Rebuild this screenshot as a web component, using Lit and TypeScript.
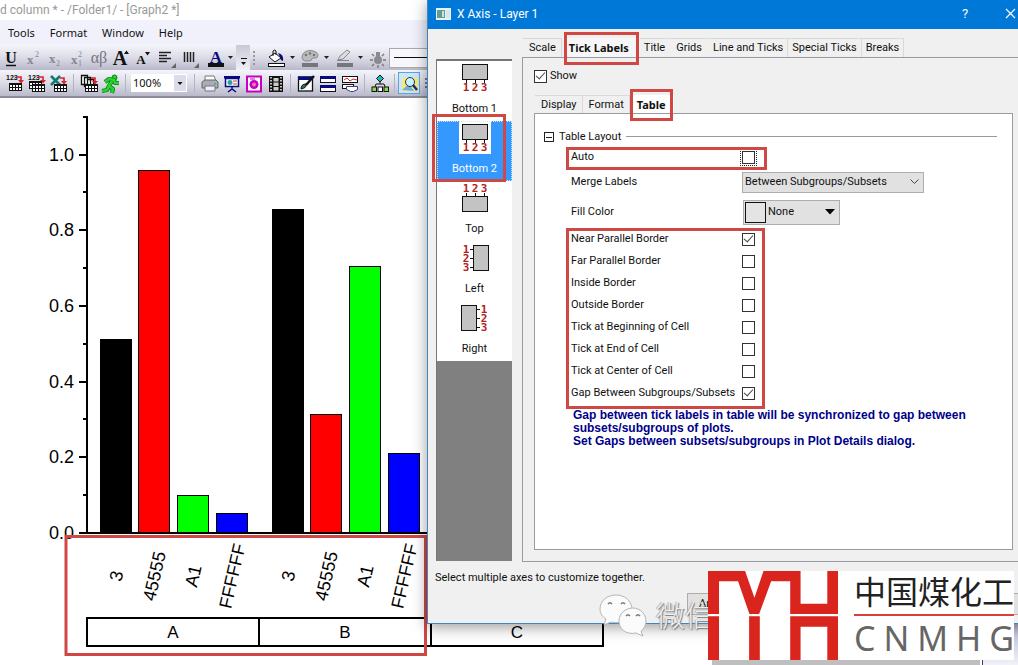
import { LitElement, html, svg, css, nothing } from "lit";
import { customElement, property, state } from "lit/decorators.js";

const NAVY = "#0a0a80";

/* ---------- toolbar glyphs, drawn on a 22 x 22 grid ---------- */
const grid = (x: number, y: number) => svg`
  <rect x=${x} y=${y} width="13" height="8" fill="#fff"/>
  <path d="M${x} ${y + 0.5}h13M${x} ${y + 1.5}h13M${x} ${y + 4.5}h13M${x} ${y + 7.5}h13M${x + 0.5} ${y}v8M${x + 3.5} ${y}v8M${x + 6.5} ${y}v8M${x + 9.5} ${y}v8M${x + 12.5} ${y}v8" stroke="#111" fill="none"/>`;
const redArrow = (x: number, y: number) => svg`
  <path d="M${x} ${y}h4v4" stroke="#e0202a" stroke-width="1.6" fill="none"/>
  <path d="M${x + 1} ${y + 3}h6l-3 3.5z" fill="#e0202a"/>`;

const icons: Record<string, unknown> = {
  underline: svg`<text x="10" y="15" class="serif" font-size="16" font-weight="700" text-anchor="middle" fill="#111">U</text><path d="M5 17.500h10" stroke="#111" stroke-width="1.500"/>`,
  sup: svg`<text x="4" y="16" class="serif" font-size="13" font-weight="700" fill="#858590">x</text><text x="12" y="9" class="serif" font-size="8" fill="#858590">2</text>`,
  sub: svg`<text x="4" y="15" class="serif" font-size="13" font-weight="700" fill="#858590">x</text><text x="11" y="18" class="serif" font-size="8" fill="#858590">2</text>`,
  supsub: svg`<text x="4" y="16" class="serif" font-size="13" font-weight="700" fill="#858590">x</text><text x="11" y="9" class="serif" font-size="8" fill="#858590">2</text><text x="11" y="18" class="serif" font-size="8" fill="#858590">1</text>`,
  greek: svg`<text x="10" y="15" class="serif" font-size="16" text-anchor="middle" fill="#75757f">αβ</text>`,
  grow: svg`<text x="9" y="17" class="serif" font-size="20" font-weight="700" text-anchor="middle" fill="#111">A</text><path d="M13 6l2.500-3.500 2.500 3.500z" fill="#111"/>`,
  shrink: svg`<text x="8" y="16" class="serif" font-size="13" font-weight="700" text-anchor="middle" fill="#111">A</text><path d="M12 4h5l-2.500 3.500z" fill="#111"/>`,
  align: svg`<path d="M4 4.500h12M4 7.500h8M4 10.500h12M4 13.500h8" stroke="#222" stroke-width="1.400"/><path d="M21 15v5h-5z" fill="#666"/>`,
  vbars: svg`<path d="M7.500 4v10M10.500 4v10M13.500 4v10M16.500 4v10" stroke="#222" stroke-width="1.500"/><path d="M22 15v5h-5z" fill="#666"/>`,
  color: svg`<text x="13" y="15" class="serif" font-size="17" font-weight="700" text-anchor="middle" fill="${NAVY}">A</text><rect x="5" y="15" width="16" height="4" fill="#111"/>`,
  bucket: svg`<path d="M4 9l6-4 6 5-6 4z" fill="#fff" stroke="#111"/><path d="M8 8V3q2-2 3 0v4" fill="none" stroke="#111"/><path d="M13 5q6 1 5 8q-3-1-3-4z" fill="${NAVY}"/><rect x="3.500" y="15.500" width="16" height="3" fill="#fff" stroke="#111"/>`,
  palette: svg`<path d="M3 10q0-7 8-7.500q8 .5 8 5q0 3-4 2.500q-3 0-3 2.500q-8 2-9-2.500z" fill="#bbb" stroke="#8a8a90"/><circle cx="7" cy="7" r="1.300" fill="#777"/><circle cx="11" cy="5.500" r="1.300" fill="#777"/><circle cx="15" cy="7" r="1.300" fill="#777"/><rect x="3" y="15" width="16" height="4" fill="#75757c"/>`,
  pen: svg`<path d="M5 12l2-4 7-6 3 2-7 7-5 1z" fill="#ddd" stroke="#85858c"/><path d="M4 12.500h12" stroke="#85858c"/><rect x="4" y="15" width="16" height="4" fill="#75757c"/>`,
  bulb: svg`<circle cx="11" cy="12" r="4" fill="#8a8a8f"/><rect x="9" y="4" width="4" height="6" fill="#8a8a8f"/><path d="M3 12h3M16 12h3M5 6l2 2M17 6l-2 2M5 18l2-2M17 18l-2-2M11 17v3" stroke="#77777c" stroke-width="1.300"/>`,
  table1: svg`<text x="2" y="7" class="sans" font-size="7" font-weight="700" fill="#111">123</text>${redArrow(13, 4)}${grid(5, 10)}`,
  table2: svg`<text x="2" y="7" class="sans" font-size="7" font-weight="700" fill="#111">123</text>${redArrow(13, 4)}${grid(3, 8)}${grid(6, 11)}`,
  excel: svg`<path d="M3 3l9 9M12 3L3 12" stroke="#147a70" stroke-width="2.600"/>${redArrow(12, 5)}${grid(6, 11)}`,
  copies: svg`<path d="M3.500 2.500h6v9h-6zM6.500 4.500h6v9h-6zM9.500 6.500h6v9h-6z" fill="#fff" stroke="#111" stroke-width="1.300"/>${redArrow(13, 5)}${grid(7, 11)}`,
  runner: svg`<circle cx="14.500" cy="4.500" r="2.500" fill="#27d52d" stroke="#0a7f14"/><path d="M5 9l4-3 5 1 1 3 4 0M12 8l-3 5 4 3-1 4M9 13l-2 4-5 1" stroke="#0a7f14" stroke-width="4.200" fill="none" stroke-linejoin="round"/><path d="M5 9l4-3 5 1 1 3 4 0M12 8l-3 5 4 3-1 4M9 13l-2 4-5 1" stroke="#27d52d" stroke-width="2.600" fill="none"/>`,
  printer: svg`<path d="M6 3h9l2 5H6z" fill="#fff" stroke="#777"/><path d="M3 9l3-2h11l2 2v6H3z" fill="#a9adb5" stroke="#666"/><path d="M6 13h10v5H6z" fill="#eef" stroke="#777"/><rect x="15" y="10" width="2" height="1.500" fill="#3b6"/>`,
  slides: svg`<rect x="3" y="3" width="16" height="2.500" fill="${NAVY}"/><rect x="4.500" y="5.500" width="13" height="8" fill="#fff" stroke="${NAVY}" stroke-width="1.500"/><circle cx="9" cy="9.500" r="2.500" fill="#26a3a3"/><path d="M12 8h4M12 11h4" stroke="#d33"/><path d="M11 14v3M7 19l4-3 4 3" stroke="${NAVY}" stroke-width="1.500" fill="none"/>`,
  magenta: svg`<rect x="4" y="3.500" width="14" height="15" fill="#fff" stroke="#c400c4" stroke-width="2"/><circle cx="11" cy="11.500" r="4.500" fill="#c400c4"/><circle cx="11" cy="11.500" r="2" fill="#f7a"/><path d="M7 6h5" stroke="#c400c4"/>`,
  film: svg`<rect x="4" y="3" width="14" height="16" fill="#111"/><path d="M8.500 5h5v3.500h-5zM8.500 9.500h5V13h-5zM8.500 14h5v3.500h-5z" fill="#ccc"/><path d="M6 4v15M16 4v15" stroke="#fff" stroke-width="1.500" stroke-dasharray="1.500 1.500"/>`,
  brush: svg`<rect x="3.500" y="4" width="14" height="14" fill="#fff" stroke="#111" stroke-width="1.300"/><rect x="3" y="3.500" width="15" height="3.500" fill="${NAVY}"/><path d="M19 3l-8 9" stroke="#111" stroke-width="2.400"/><path d="M6 16q0-5 5-5q1 4-5 5z" fill="#177a6a" stroke="#111"/>`,
  bands: svg`<rect x="3.500" y="3.500" width="15" height="6" fill="#fff" stroke="#111"/><rect x="3" y="3" width="16" height="3" fill="${NAVY}"/><rect x="3.500" y="12.500" width="15" height="6" fill="#fff" stroke="#111"/><rect x="3" y="12" width="16" height="3" fill="${NAVY}"/>`,
  layers: svg`<rect x="3.500" y="3.500" width="15" height="6" fill="#fff" stroke="#111"/><path d="M5 7l3-2 3 3 3-2 4 1" stroke="#e02020" fill="none"/><rect x="3.500" y="11.500" width="11" height="4" fill="#fff" stroke="#111"/><path d="M7.500 13.500h11v3l-4 2h-3l-4-2z" fill="#fff" stroke="#3a3a90"/>`,
  tree: svg`<path d="M11 7v4M5 16l2-5h8l2 5" stroke="#111" fill="none"/><path d="M11 2l3.500 3.500L11 9 7.500 5.500z" fill="#19b9b9" stroke="#111"/><rect x="3" y="14" width="4.500" height="4.500" fill="#8d4" stroke="#111"/><rect x="9" y="14" width="4.500" height="4.500" fill="#fff" stroke="#111"/><rect x="15" y="14" width="4.500" height="4.500" fill="#8d4" stroke="#111"/>`,
  zoom: svg`<path d="M3 5h16v13H3z" fill="#f5ea78"/><path d="M3 17l7-6 5 7z" fill="#7ad"/><circle cx="11" cy="9" r="4.500" fill="#c9f4ff" stroke="#234"/><path d="M14 12l4 5" stroke="#112a90" stroke-width="2.400"/>`,
  more: svg`<path d="M6.500 4v14M4 6h5M4 10h5M4 14h5" stroke="#111"/>`,
};

@customElement("tool-button")
class ToolButton extends LitElement {
  @property() icon = "";
  @property() label = "";
  @property({ type: Boolean, reflect: true }) menu = false;
  @property({ type: Boolean, reflect: true }) active = false;
  static styles = css`
    :host { display: flex; align-items: center; flex: none; }
    button { appearance: none; border: 1px solid transparent; background: none; padding: 0; width: 22px; height: 22px; display: grid; place-items: center; }
    :host([active]) button { background: #cde6f7; border-color: #5aa5de; }
    svg { display: block; flex: none; }
    .serif { font-family: "Liberation Serif", serif; }
    .sans { font-family: "Liberation Sans", sans-serif; }
    .drop { width: 12px; }
  `;
  render() {
    return html`<button aria-label=${this.label}><svg width="22" height="22" viewBox="0 0 22 22">${icons[this.icon]}</svg></button>
      ${this.menu
        ? html`<button class="drop" aria-label="${this.label} options"><svg width="7" height="4" viewBox="0 0 7 4"><path d="M1 0h5l-2.500 3z" fill="#222"/></svg></button>`
        : nothing}`;
  }
}

/* ---------- grouped column graph with a tick-label table ---------- */
const BASE = 533;
const BARS = [
  { label: "3", fill: "#000", left: 0, tops: [340, 210] },
  { label: "45555", fill: "#f00", left: 38, tops: [171, 415] },
  { label: "A1", fill: "#0f0", left: 77, tops: [496, 267] },
  { label: "FFFFFF", fill: "#00f", left: 116, tops: [514, 454] },
];

@customElement("column-graph")
class ColumnGraph extends LitElement {
  static styles = css`
    :host { display: block; }
    svg { display: block; }
    text { font-family: "Liberation Sans", Arial, sans-serif; fill: #000; text-anchor: middle; }
    .tick { font-size: 18px; text-anchor: end; }
    .name { font-size: 18px; }
    .cell { font-size: 17px; }
  `;
  render() {
    const ticks = ["0.0", "0.2", "0.4", "0.6", "0.8", "1.0"];
    const step = 75.7;
    return html`<svg width="640" height="567" viewBox="0 98 640 567" role="img" aria-label="Grouped column graph">
      ${ticks.map((t, i) => {
        const y = Math.round(BASE - i * step);
        return svg`<text class="tick" x="74" y=${y + 6}>${t}</text>
          <path d="M79 ${y}h8M83 ${Math.round(y - step / 2)}h4" stroke="#000" stroke-width="2"/>`;
      })}
      <path d="M87 116V533H640" stroke="#000" stroke-width="2" fill="none"/>
      ${[0, 1].map((g) =>
        BARS.map((b) => {
          const x = 100.5 + g * 172 + b.left;
          return svg`<rect x=${x} y=${b.tops[g] - 0.5} width="31" height=${BASE - b.tops[g]} fill=${b.fill} stroke="#000"/>
            <text class="name" transform="translate(${x + 16} 576) rotate(-77)" dy="6">${b.label}</text>`;
        })
      )}
      <path d="M87 618H603V646H87ZM259 618V646M431 618V646" stroke="#000" stroke-width="2" fill="none"/>
      ${["A", "B", "C"].map((c, i) => svg`<text class="cell" x=${173 + i * 172} y="638">${c}</text>`)}
      <rect x="66" y="536.500" width="359.500" height="118" fill="none" stroke="#cf4844" stroke-width="3"/>
    </svg>`;
  }
}

/* ---------- axis dialog ---------- */
const digits = (pts: number[][]) =>
  pts.map(([x, y], i) => svg`<text x=${x} y=${y} text-anchor="middle" font-size="11" font-weight="700" fill="#b22222" font-family="DejaVu Sans Mono, monospace">${i + 1}</text>`);
const box = (x: number, y: number, w: number, h: number) =>
  svg`<rect x=${x + 0.5} y=${y + 0.5} width=${w} height=${h} fill="#c3c3c3" stroke="#111"/>`;
const below = svg`${box(3, 3, 25, 15)}<path d="M7.500 18v4M16.500 18v4M25.500 18v4" stroke="#111"/>${digits([[7, 30], [16, 30], [25, 30]])}`;
const AXES = [
  { name: "Bottom 1", art: below },
  { name: "Bottom 2", art: below },
  { name: "Top", art: svg`${box(3, 15, 25, 15)}<path d="M7.500 12v4M16.500 12v4M25.500 12v4" stroke="#111"/>${digits([[7, 11], [16, 11], [25, 11]])}` },
  { name: "Left", art: svg`${box(14, 4, 15, 25)}<path d="M11 8.500h4M11 17.500h4M11 26.500h4" stroke="#111"/>${digits([[7, 12], [7, 21], [7, 30]])}` },
  { name: "Right", art: svg`${box(2, 4, 15, 25)}<path d="M17 8.500h4M17 17.500h4M17 26.500h4" stroke="#111"/>${digits([[25, 12], [25, 21], [25, 30]])}` },
];
const OPTIONS: [string, boolean][] = [
  ["Near Parallel Border", true],
  ["Far Parallel Border", false],
  ["Inside Border", false],
  ["Outside Border", false],
  ["Tick at Beginning of Cell", false],
  ["Tick at End of Cell", false],
  ["Tick at Center of Cell", false],
  ["Gap Between Subgroups/Subsets", true],
];

@customElement("axis-dialog")
class AxisDialog extends LitElement {
  @state() private axis = "Bottom 2";

  static styles = css`
    :host { display: flex; flex-direction: column; box-sizing: border-box; background: #f0f0f0; border: 1px solid #3c86c4; border-top: 0; box-shadow: 0 3px 14px rgba(0, 0, 0, 0.4); font: 11px/14px Roboto, sans-serif; color: #111; }
    * { box-sizing: border-box; }
    button, input, select { font: inherit; color: inherit; margin: 0; border-radius: 0; }
    label { white-space: nowrap; }
    header { display: flex; align-items: center; height: 29px; background: #0078d7; color: #fff; font-size: 12px; padding: 0 16px 2px 8px; }
    header svg { display: block; }
    header h1 { font: inherit; margin: 0 auto 0 6px; }
    header button { appearance: none; border: 0; background: none; padding: 0; width: 46px; height: 27px; display: grid; place-items: center; color: #fff; font-size: 13px; }
    header button:last-child { width: 44px; margin-right: -15px; }
    .body { display: grid; grid-template-columns: 76px minmax(0, 1fr); column-gap: 10px; padding: 9px 8px 0; }
    .axes { margin-top: 21px; margin-bottom: 1px; background: #808080; border-left: 1px solid #777; border-top: 2px solid #777; }
    .axis { appearance: none; position: relative; display: flex; flex-direction: column; align-items: center; width: 100%; height: 60px; border: 0; padding: 0; background: #fff; }
    .axis svg { display: block; background: #fff; margin-bottom: 8px; }
    .axis.on { background: #3399ff; color: #fff; outline: 1px dotted #cfe6ff; outline-offset: -1px; }
    .mark { position: relative; }
    .mark::after { content: ""; position: absolute; border: 3px solid #cf4844; pointer-events: none; z-index: 2; }
    .axis.mark::after { inset: -7px 6px -1px -5px; }
    .tabs { display: flex; height: 19px; margin-left: 1px; }
    .tabs button { appearance: none; background: none; border: 0 solid #d9d9d9; border-top-width: 1px; border-right-width: 1px; padding: 0 5px 0 6px; white-space: nowrap; }
    .tabs .on { background: #fff; font-family: "Noto Sans", sans-serif; font-weight: 700; border-color: transparent; }
    .outer .on { margin-left: 2px; padding: 0 10px 0 5px; background: #f7f7f7; }
    .outer .on ~ button { padding: 0 4px; }
    .outer .on ~ .plain { border-right-color: transparent; padding: 0 6px 0 4px; }
    .tabs .on.mark::after { inset: -7px 0 -8px 0; }
    .pane { border: 1px solid #9a9aa2; padding: 11px; min-height: 505px; display: flex; flex-direction: column; }
    .show { display: flex; align-items: center; gap: 3px; height: 14px; margin-bottom: 12px; }
    .inner { height: 18px; }
    .inner .on { padding: 0 7px; }
    .sheet { flex: 1; background: #fff; border: 1px solid #9a9aa2; padding: 14px 15px 0 9px; }
    input[type="checkbox"] { appearance: none; width: 13px; height: 13px; border: 1px solid #333; background: #fff; display: grid; place-items: center; flex: none; }
    input[type="checkbox"]:checked::before { content: ""; width: 4px; height: 8px; margin-top: -3px; border: solid #444; border-width: 0 1px 1px 0; transform: rotate(42deg); }
    input.focus { outline: 1px dotted #222; outline-offset: 1px; }
    .fold { display: flex; align-items: center; height: 18px; gap: 5px; }
    .fold::after { content: ""; flex: 1; height: 1px; background: #9a9a9a; margin-top: -2px; }
    .fold button { appearance: none; border: 1px solid #222; background: #fff; width: 10px; height: 10px; padding: 0; display: grid; place-items: center; }
    .fold button::before { content: ""; width: 6px; height: 1px; background: #222; }
    .rows { padding-left: 27px; }
    .row { display: grid; grid-template-columns: 171px max-content; align-items: center; min-height: 22px; }
    .check { width: 188px; }
    .check.mark::after { inset: 1px -8px -2px -5px; }
    .group { width: 188px; }
    .group.mark::after { inset: 0 -6px -5px -5px; }
    .merge { min-height: 28px; }
    .fill { min-height: 32px; }
    .combo { position: relative; display: flex; align-items: center; }
    .combo select { appearance: none; background: #e1e1e1; border: 1px solid #adadad; width: 182px; height: 21px; padding: 0 2px; }
    .combo svg { position: absolute; right: 5px; pointer-events: none; }
    .fill .combo { margin-left: 1px; }
    .fill select { width: 97px; height: 25px; padding-left: 24px; }
    .swatch { position: absolute; left: 2px; width: 21px; height: 21px; border: 1px solid #111; background: #e4e4e4; pointer-events: none; }
    .note { margin: 5px 0 0 29px; max-width: 420px; font: 700 12px/13px "Liberation Sans", Arial, sans-serif; color: #00008b; }
    .hint { margin: 0; padding: 9px 7px 8px; }
    footer { display: flex; justify-content: space-between; padding: 0 12px 8px 259px; }
    footer button { appearance: none; border: 1px solid #adadad; background: #e1e1e1; width: 75px; height: 22px; padding: 0; }
  `;

  private tick(label: string, checked: boolean, cls = "", focus = false) {
    const id = label.toLowerCase().replace(/\W+/g, "-");
    return html`<div class="row ${cls}"><label for=${id}>${label}</label><input class=${focus ? "focus" : ""} id=${id} type="checkbox" .checked=${checked} /></div>`;
  }

  render() {
    return html`
      <header>
        <svg width="15" height="12" viewBox="0 0 15 12"><rect width="15" height="12" fill="#e8f3f4"/><rect x="1" y="2" width="8" height="8" fill="#5f9c92"/><rect x="6" y="3" width="2" height="6" fill="#cfe4da"/><rect x="10" y="2" width="4" height="8" fill="#d9e6ee"/></svg>
        <h1>X Axis - Layer 1</h1>
        <button aria-label="Help">?</button>
        <button aria-label="Close"><svg width="11" height="11" viewBox="0 0 11 11"><path d="M1 1l9 9M10 1l-9 9" stroke="#fff" stroke-width="1.200"/></svg></button>
      </header>
      <div class="body">
        <nav class="axes">
          ${AXES.map((a) => html`<button class="axis ${a.name === this.axis ? "on mark" : ""}" @click=${() => (this.axis = a.name)}>
            <svg width="32" height="33" viewBox="0 0 32 33">${a.art}</svg>${a.name}</button>`)}
        </nav>
        <section>
          <div class="tabs outer">
            <button>Scale</button><button class="on mark">Tick Labels</button><button class="plain">Title</button><button class="plain">Grids</button><button>Line and Ticks</button><button>Special Ticks</button><button>Breaks</button>
          </div>
          <div class="pane">
            <div class="show"><input id="show" type="checkbox" checked /><label for="show">Show</label></div>
            <div class="tabs inner"><button>Display</button><button>Format</button><button class="on mark">Table</button></div>
            <div class="sheet">
              <div class="fold"><button aria-label="Collapse Table Layout"></button>Table Layout</div>
              <div class="rows">
                ${this.tick("Auto", false, "check mark", true)}
                <div class="row merge"><label for="merge">Merge Labels</label>
                  <span class="combo"><select id="merge"><option>Between Subgroups/Subsets</option></select>
                    <svg width="9" height="6" viewBox="0 0 9 6"><path d="M.5 .5l4 4 4-4" stroke="#444" fill="none"/></svg></span></div>
                <div class="row fill"><label for="fill">Fill Color</label>
                  <span class="combo"><select id="fill"><option>None</option></select><span class="swatch"></span>
                    <svg width="10" height="6" viewBox="0 0 10 6"><path d="M0 0h10l-5 5.500z" fill="#000"/></svg></span></div>
                <div class="group mark">${OPTIONS.map(([l, c]) => this.tick(l, c))}</div>
              </div>
              <p class="note">Gap between tick labels in table will be synchronized to gap between subsets/subgroups of plots.<br />Set Gaps between subsets/subgroups in Plot Details dialog.</p>
            </div>
          </div>
        </section>
      </div>
      <p class="hint">Select multiple axes to customize together.</p>
      <footer><button>Apply To...</button><button aria-label="Apply"></button></footer>
    `;
  }
}

/* ---------- main window ---------- */
@customElement("app-root")
class AppRoot extends LitElement {
  static styles = css`
    :host { display: block; position: relative; min-height: 100vh; overflow: hidden; background: #fff; font: 11px/14px "Noto Sans", sans-serif; color: #111; }
    * { box-sizing: border-box; }
    .title { height: 20px; font: 12px/20px Roboto, sans-serif; color: #999; white-space: nowrap; }
    .menu { display: flex; align-items: center; gap: 15px; height: 25px; padding-left: 8px; background: #f0f1fb; }
    .menu a { color: inherit; text-decoration: none; }
    .bar { display: flex; align-items: center; background: linear-gradient(#f4f4fb, #dcdce8 50%, #b9b9ca); overflow: hidden; }
    .one { height: 25px; }
    .two { height: 28px; padding-left: 3px; border-bottom: 2px solid #8c8c96; }
    .wide { width: 26px; }
    .sep { width: 8px; display: flex; justify-content: center; flex: none; }
    .sep::before { content: ""; width: 1px; height: 18px; background: #b3b3c2; }
    .end { width: 14px; height: 25px; flex: none; display: grid; place-items: end center; padding: 0 0 4px; border: 0; background: linear-gradient(#c9c9d6, #f0f0f8); }
    .grip { width: 14px; height: 16px; flex: none; background: radial-gradient(circle, #999 1px, transparent 1px) 2px 0 / 4px 4px repeat-y; }
    .line { width: 60px; height: 20px; margin-left: 1px; border: 1px solid #aaa; background: #f8f8fc; display: grid; align-items: center; padding: 0 4px; }
    .line::before { content: ""; height: 1px; background: #111; }
    .scale { position: relative; width: 61px; flex: none; padding-left: 2px; display: flex; align-items: center; }
    .scale select { appearance: none; width: 56px; height: 18px; border: 0; border-radius: 0; background: #fff; font: inherit; color: inherit; padding: 0 2px; }
    .scale svg { position: absolute; right: 4px; pointer-events: none; }
    axis-dialog { position: absolute; top: 0; left: 427px; right: -16px; }
    .corner { position: absolute; right: 0; bottom: 0; width: 306px; height: 42px; display: grid; grid-template-columns: 1fr 3px 35px; align-items: end; }
    .corner i:nth-child(1) { height: 5px; background: #bfbfbf; }
    .corner i:nth-child(2) { height: 5px; background: #fff; border-right: 1px solid #445; }
    .corner i:nth-child(3) { height: 42px; background: linear-gradient(#b9b9d0, #f1f1fa); }
    .wechat { position: absolute; left: 599px; top: 593px; display: flex; align-items: flex-start; gap: 9px; font: 300 29px/42px "Noto Sans CJK SC", sans-serif; color: #eee; text-shadow: 1px 1px 1px #777, -1px 0 1px #aaa; }
    .brand { position: absolute; right: 4px; bottom: 5px; width: 306px; height: 89px; background: #fff; display: grid; grid-template-columns: 130px 1fr; column-gap: 16px; }
    .brand svg { display: block; }
    .words { display: grid; grid-template-rows: 42px 3px 44px; }
    .words b { font: 32px/38px "Noto Sans CJK SC", sans-serif; color: #222; white-space: nowrap; }
    .words i { background: #d8403a; margin-top: 1px; }
    .latin { display: flex; justify-content: space-between; font: 34px/44px "Noto Sans", sans-serif; color: #666; }
  `;
  private row(list: [string, string, boolean?][]) {
    return list.map(([icon, label, menu]) => html`<tool-button .icon=${icon} .label=${label} ?menu=${!!menu}></tool-button>`);
  }
  render() {
    const sep = html`<span class="sep"></span>`;
    return html`
      <div class="title">d column * - /Folder1/ - [Graph2 *]</div>
      <nav class="menu">${["Tools", "Format", "Window", "Help"].map((m) => html`<a href="#">${m}</a>`)}</nav>
      <div class="bar one">
        ${this.row([["underline", "Underline"], ["sup", "Superscript"], ["sub", "Subscript"], ["supsub", "Super and subscript"], ["greek", "Greek"], ["grow", "Increase font"], ["shrink", "Decrease font"], ["align", "Align"]])}
        <tool-button class="wide" icon="vbars" label="Distribute"></tool-button>
        <tool-button icon="color" label="Font color" menu></tool-button>
        <button class="end" aria-label="Toolbar options"><svg width="7" height="8" viewBox="0 0 7 8"><path d="M1 .5h6" stroke="#111"/><path d="M1 4h5l-2.500 3z" fill="#111"/></svg></button>
        <span class="grip"></span>
        ${this.row([["bucket", "Fill color", true], ["palette", "Palette", true], ["pen", "Line color", true], ["bulb", "Lighting"]])}
        <span class="line"></span>
      </div>
      <div class="bar two">
        ${this.row([["table1", "Import"], ["table2", "Import multiple"], ["excel", "Import Excel"]])}${sep}
        ${this.row([["copies", "Batch"], ["runner", "Recalculate"]])}${sep}
        <span class="scale"><select aria-label="Zoom"><option>100%</option></select><svg width="12" height="16" viewBox="0 0 12 16"><rect width="12" height="16" fill="#dcdce8"/><path d="M3.500 7h5l-2.500 3z" fill="#111"/></svg></span>${sep}
        ${this.row([["printer", "Print"], ["slides", "Slide show"], ["magenta", "Project"], ["film", "Video"]])}${sep}
        ${this.row([["brush", "Edit"], ["bands", "Rows"], ["layers", "Layers"]])}${sep}
        ${this.row([["tree", "Tree"]])}${sep}
        <tool-button icon="zoom" label="Zoom in" active></tool-button>
        <tool-button icon="more" label="More"></tool-button>
      </div>
      <column-graph></column-graph>
      <div class="corner"><i></i><i></i><i></i></div>
      <axis-dialog></axis-dialog>
      <div class="wechat">
        <svg width="48" height="44" viewBox="0 0 48 44"><g fill="#fbfbfb" stroke="#b5b5b5"><path d="M17 2C8 2 1 8 1 16c0 5 3 8 6 10l-2 6 7-3c14 3 22-4 21-14C32 7 25 2 17 2z"/><path d="M34 15c-8 0-14 6-14 13 0 8 7 14 17 12l7 3-2-5c3-2 5-6 5-10 0-7-6-13-13-13z"/></g><g fill="none" stroke="#777" stroke-width="1.500"><path d="M9 11q2-2.500 4 0M22 11q2-2.500 4 0M27 23q2-2.500 4 0M37 23q2-2.500 4 0"/></g></svg>
        <span>微信</span>
      </div>
      <div class="brand">
        <svg width="130" height="89" viewBox="54 78 389 267" preserveAspectRatio="none">
          <path fill="#d9251d" d="M54 78H165L193 158L220 78H331V176H411V78H443V207H300V109H243L207 207H178L144 109H87V207H54ZM54 214H87V345H54ZM177 214H209V345H177ZM300 214H443V345H411V245H331V345H300Z"/>
        </svg>
        <div class="words"><b>中国煤化工</b><i></i><span class="latin"><span>C</span><span>N</span><span>M</span><span>H</span><span>G</span></span></div>
      </div>
    `;
  }
}
